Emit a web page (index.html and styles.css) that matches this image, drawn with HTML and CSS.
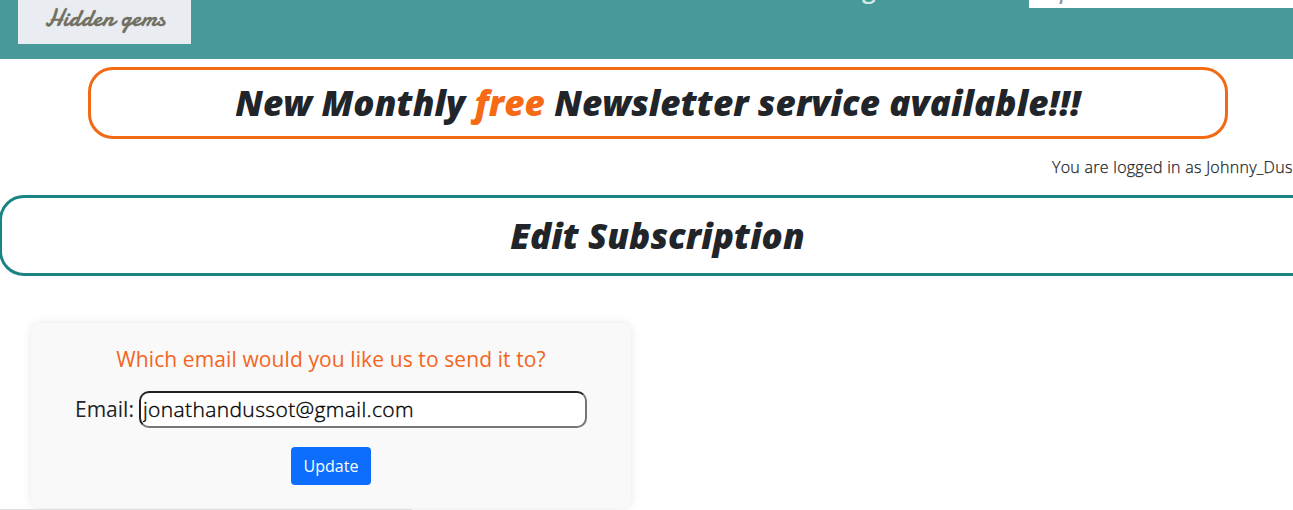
FILE: index.html
```html
<!DOCTYPE html>
<html lang="en">
<head>
<meta charset="utf-8">
<title>Edit Subscription</title>
<link rel="stylesheet" href="styles.css">
</head>
<body>
<header class="site-header">
  <div class="logo"><span class="logo-text">Hidden gems</span></div>
  <div class="nav-slot"><span class="nav-link">g</span></div>
  <div class="search"><span class="search-hint">p</span></div>
</header>
<main>
  <h1 class="banner"><span class="banner-text">New Monthly <span class="accent">free</span> Newsletter service available!!!</span></h1>
  <p class="user">You are logged in as Johnny_Dus</p>
  <h2 class="title"><span class="title-text">Edit Subscription</span></h2>
  <form class="card">
    <p class="question">Which email would you like us to send it to?</p>
    <div class="field">
      <label for="email">Email:</label>
      <input class="email" id="email" type="text" value="jonathandussot@gmail.com">
    </div>
    <button class="update" type="button">Update</button>
  </form>
</main>
<div class="status-edge"></div>
</body>
</html>
```
FILE: styles.css
```css
* { box-sizing: border-box; }
html, body { height: 510px; overflow: hidden; }
body {
  margin: 0;
  background: #fff;
  color: #212529;
  font-family: "Open Sans", sans-serif;
  font-size: 16px;
  font-weight: 300;
  line-height: 24px;
}
.site-header {
  display: flex;
  align-items: flex-start;
  height: 59px;
  padding-left: 18px;
  background: #479a99;
}
.logo {
  width: 173px;
  height: 44px;
  padding: 5px 0 0 27px;
  background: #e9ecf1;
  white-space: nowrap;
}
.logo-text {
  color: #706f60;
  font-family: "Yellowtail", "Damion", "Liberation Serif", cursive;
  font-size: 25px;
  letter-spacing: 0.3px;
  font-weight: 400;
  line-height: 26px;
  -webkit-text-stroke: 0.4px #706f60;
}
.nav-slot {
  display: flex;
  align-items: flex-end;
  width: 838px;
  height: 8px;
  padding-left: 671px;
}
.nav-link { color: #d5e8e8; font-size: 25px; font-weight: 600; line-height: 34px; position: relative; top: -3px; }
.search {
  display: flex;
  align-items: flex-end;
  flex: 1;
  height: 8px;
  padding-left: 31px;
  background: #fff;
  overflow: hidden;
}
.search-hint { color: #8c929a; font-size: 20px; font-style: italic; font-weight: 600; line-height: 32px; }
.banner, .title {
  display: flex;
  align-items: center;
  justify-content: center;
  font-size: 35px;
  font-style: italic;
  font-weight: 800;
  line-height: 42px;
  letter-spacing: 0.1px;
  white-space: nowrap;
}
.banner {
  width: 1140px;
  height: 72px;
  margin: 8px 0 0 88px;
  border: 3px solid #f26a15;
  border-radius: 25px;
}
.accent { color: #f66a15; }
.user {
  margin: 16px 0 16px 1052px;
  letter-spacing: 0.27px;
  white-space: nowrap;
  -webkit-text-stroke: 0.25px #212529;
}
.title {
  width: 1317px;
  height: 81px;
  margin: 0 0 0 -1px;
  border: 3px solid #198482;
  border-radius: 25px;
}
.card {
  width: 600px;
  height: 185px;
  margin: 47px 0 0 31px;
  padding: 20px 44px 0;
  border-radius: 10px;
  background: #f9f9f9;
  box-shadow: 0 0 10px rgba(0, 0, 0, 0.1);
  text-align: center;
}
.question {
  margin: 0 0 15px;
  color: #f26522;
  font-size: 21px;
  font-weight: 400;
  letter-spacing: 0.1px;
  line-height: 33px;
}
.field {
  display: flex;
  align-items: center;
  gap: 5px;
  height: 37px;
  font-size: 21px;
  font-weight: 400;
  line-height: 29px;
  white-space: nowrap;
}
.field label { padding-bottom: 1px; }
.email {
  flex: 1;
  min-width: 0;
  height: 37px;
  padding: 0 2px 2px;
  border: 2px inset #767676;
  border-radius: 10px;
  background: #fff;
  color: #000;
  font: 300 21px "Open Sans", sans-serif;
  letter-spacing: 0.38px;
  -webkit-text-stroke: 0.35px #000;
}
.update {
  display: block;
  width: 80px;
  height: 38px;
  margin: 19px auto 0;
  padding: 0;
  border: 0;
  border-radius: 4px;
  background: #0d6efd;
  color: #fff;
  font: 400 16px "Open Sans", sans-serif;
}
.status-edge {
  position: absolute;
  top: 509px;
  left: 0;
  width: 412px;
  height: 1px;
  background: #dedede;
}
```
